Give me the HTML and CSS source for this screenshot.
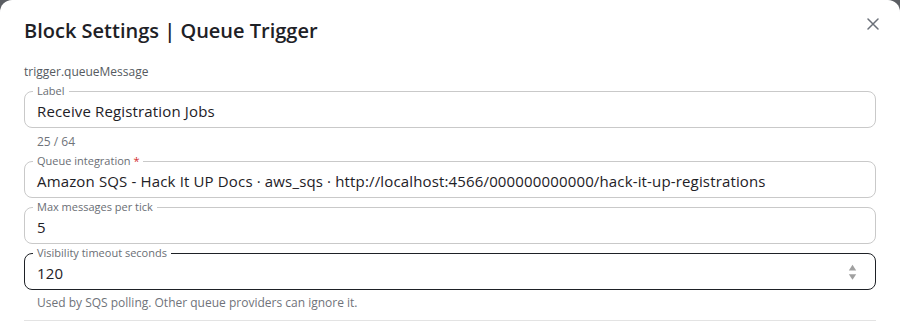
FILE: index.html
```html
<!DOCTYPE html>
<html lang="en">
<head>
<meta charset="utf-8">
<title>Block Settings | Queue Trigger</title>
<link rel="stylesheet" href="styles.css">
</head>
<body>
<div class="modal">
  <header class="modal-head">
    <h2 class="title">Block Settings | Queue Trigger</h2>
    <button class="close" aria-label="Close">
      <svg width="12" height="12" viewBox="0 0 12 12"><path d="M1 1 L11 11 M11 1 L1 11" stroke="#6b7079" stroke-width="1.5" stroke-linecap="round"/></svg>
    </button>
  </header>
  <div class="modal-body">
    <div class="type-id">trigger.queueMessage</div>

    <fieldset class="field first">
      <legend>Label</legend>
      <div class="control"><input class="input" type="text" value="Receive Registration Jobs"></div>
    </fieldset>
    <div class="helper counter">25 / 64</div>

    <fieldset class="field after-helper">
      <legend>Queue integration <span class="req">*</span></legend>
      <div class="control"><span class="value">Amazon SQS - Hack It UP Docs · aws_sqs · http://localhost:4566/000000000000/hack-it-up-registrations</span></div>
    </fieldset>

    <fieldset class="field spaced">
      <legend>Max messages per tick</legend>
      <div class="control"><input class="input" type="text" value="5"></div>
    </fieldset>

    <fieldset class="field spaced active">
      <legend>Visibility timeout seconds</legend>
      <div class="control">
        <input class="input" type="text" value="120">
        <svg class="spin" width="9" height="17" viewBox="0 0 9 17"><path d="M4.5 0.8 L8.2 6.4 L0.8 6.4 Z" fill="#a0a0a0"/><path d="M0.8 10.2 L8.2 10.2 L4.5 15.8 Z" fill="#a0a0a0"/></svg>
      </div>
    </fieldset>
    <div class="helper note">Used by SQS polling. Other queue providers can ignore it.</div>
    <div class="divider"></div>
  </div>
</div>
</body>
</html>
```

FILE: styles.css
```css
* { box-sizing: border-box; }
html, body { margin: 0; padding: 0; }
body {
  background: #5b5e63;
  font-family: "Open Sans", "Noto Sans", sans-serif;
  color: #1e2126;
  width: 900px;
  height: 322px;
  overflow: hidden;
}
.modal {
  background: #ffffff;
  border-radius: 12px 12px 0 0;
  height: 322px;
  padding: 0 24px;
}
.modal-head {
  display: flex;
  justify-content: space-between;
  align-items: flex-start;
  padding-top: 18px;
}
.title {
  margin: 0;
  font-size: 20px;
  line-height: 26px;
  font-weight: 600;
  color: #1e2126;
}
.close {
  border: 0;
  background: none;
  padding: 0;
  margin: -1px -4px 0 0;
  width: 14px;
  height: 14px;
  display: flex;
  align-items: center;
  justify-content: center;
}
.modal-body {
  display: flex;
  flex-direction: column;
}
.type-id {
  font-size: 12px;
  line-height: 16px;
  color: #555a61;
  margin-top: 20px;
}
.field {
  margin: 0;
  padding: 0 12px 0 8px;
  border: 1px solid #c9c9c9;
  border-radius: 8px;
  min-width: 0;
}
.field.first { margin-top: 5px; }
.field.after-helper { margin-top: 5px; }
.field.spaced { margin-top: 3px; }
.field.active { border-color: #1e2126; }
.field legend {
  font-size: 11px;
  line-height: 12px;
  height: 12px;
  color: #6a6e74;
  padding: 0 4px;
  white-space: nowrap;
}
.req { color: #d32f2f; line-height: 12px; }
.control {
  display: flex;
  align-items: center;
  height: 30px;
  padding: 0 0 3px 4px;
}
.input, .value {
  flex: 1;
  border: 0;
  outline: none;
  padding: 0;
  margin: 0;
  background: transparent;
  font-family: inherit;
  font-size: 15px;
  letter-spacing: 0.15px;
  color: #1e2126;
  white-space: nowrap;
  min-width: 0;
}
.spin { flex: none; margin-right: 6px; }
.helper {
  font-size: 12px;
  line-height: 16px;
  color: #6f737a;
  padding-left: 13px;
  margin-top: 6px;
}
.helper.note { margin-top: 5px; }
.divider {
  margin-top: 9px;
  height: 1px;
  background: #e3e3e3;
}
```
